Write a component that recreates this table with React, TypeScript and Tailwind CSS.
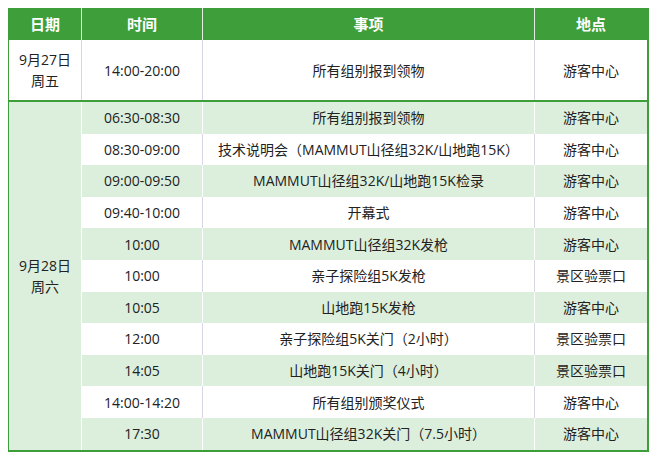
const FONT = { fontFamily: '"Open Sans", "Noto Sans CJK SC", sans-serif' }

interface Item {
  time: string
  event: string
  place: string
}

const DAY2: Item[] = [
  { time: '06:30-08:30', event: '所有组别报到领物', place: '游客中心' },
  { time: '08:30-09:00', event: '技术说明会（MAMMUT山径组32K/山地跑15K）', place: '游客中心' },
  { time: '09:00-09:50', event: 'MAMMUT山径组32K/山地跑15K检录', place: '游客中心' },
  { time: '09:40-10:00', event: '开幕式', place: '游客中心' },
  { time: '10:00', event: 'MAMMUT山径组32K发枪', place: '游客中心' },
  { time: '10:00', event: '亲子探险组5K发枪', place: '景区验票口' },
  { time: '10:05', event: '山地跑15K发枪', place: '游客中心' },
  { time: '12:00', event: '亲子探险组5K关门（2小时）', place: '景区验票口' },
  { time: '14:05', event: '山地跑15K关门（4小时）', place: '景区验票口' },
  { time: '14:00-14:20', event: '所有组别颁奖仪式', place: '游客中心' },
  { time: '17:30', event: 'MAMMUT山径组32K关门（7.5小时）', place: '游客中心' },
]

function Row({ item, green }: { item: Item; green: boolean }) {
  const bg = green ? 'bg-[#dcefdc] border-white' : 'bg-white border-[#d6d6e4]'
  return (
    <div className={`flex h-[31.6px] items-center text-[14px] text-[#222] ${bg}`}>
      <div className={`flex h-full w-[121px] items-center justify-center border-r ${bg}`}>{item.time}</div>
      <div className={`flex h-full w-[332px] items-center justify-center border-r ${bg}`}>{item.event}</div>
      <div className="flex h-full flex-1 items-center justify-center">{item.place}</div>
    </div>
  )
}

export default function App() {
  return (
    <div className="h-[460px] w-[657px] bg-white pt-2 pl-2" style={FONT}>
      <div className="w-[641px] border-b-2 border-l border-r-2 border-[#3d9e3a]">
        <div className="flex h-[32px] bg-[#3d9e3a] text-[15px] font-bold text-white">
          <div className="flex w-[73px] items-center justify-center border-r border-[#e4ece4]">日期</div>
          <div className="flex w-[121px] items-center justify-center border-r border-[#e4ece4]">时间</div>
          <div className="flex w-[332px] items-center justify-center border-r border-[#e4ece4]">事项</div>
          <div className="flex flex-1 items-center justify-center">地点</div>
        </div>

        <div className="flex h-[62px] border-b-2 border-[#3d9e3a] text-[14px] text-[#222]">
          <div className="flex w-[73px] flex-col items-center justify-center border-r border-[#d6d6e4] leading-[21px]">
            <span>9月27日</span>
            <span>周五</span>
          </div>
          <div className="flex w-[121px] items-center justify-center border-r border-[#d6d6e4]">14:00-20:00</div>
          <div className="flex w-[332px] items-center justify-center border-r border-[#d6d6e4]">所有组别报到领物</div>
          <div className="flex flex-1 items-center justify-center">游客中心</div>
        </div>

        <div className="flex">
          <div className="flex w-[73px] flex-col items-center justify-center border-r border-white bg-[#dcefdc] text-[14px] leading-[21px] text-[#222]">
            <span>9月28日</span>
            <span>周六</span>
          </div>
          <div className="flex-1">
            {DAY2.map((item, i) => (
              <Row key={i} item={item} green={i % 2 === 0} />
            ))}
          </div>
        </div>
      </div>
    </div>
  )
}
